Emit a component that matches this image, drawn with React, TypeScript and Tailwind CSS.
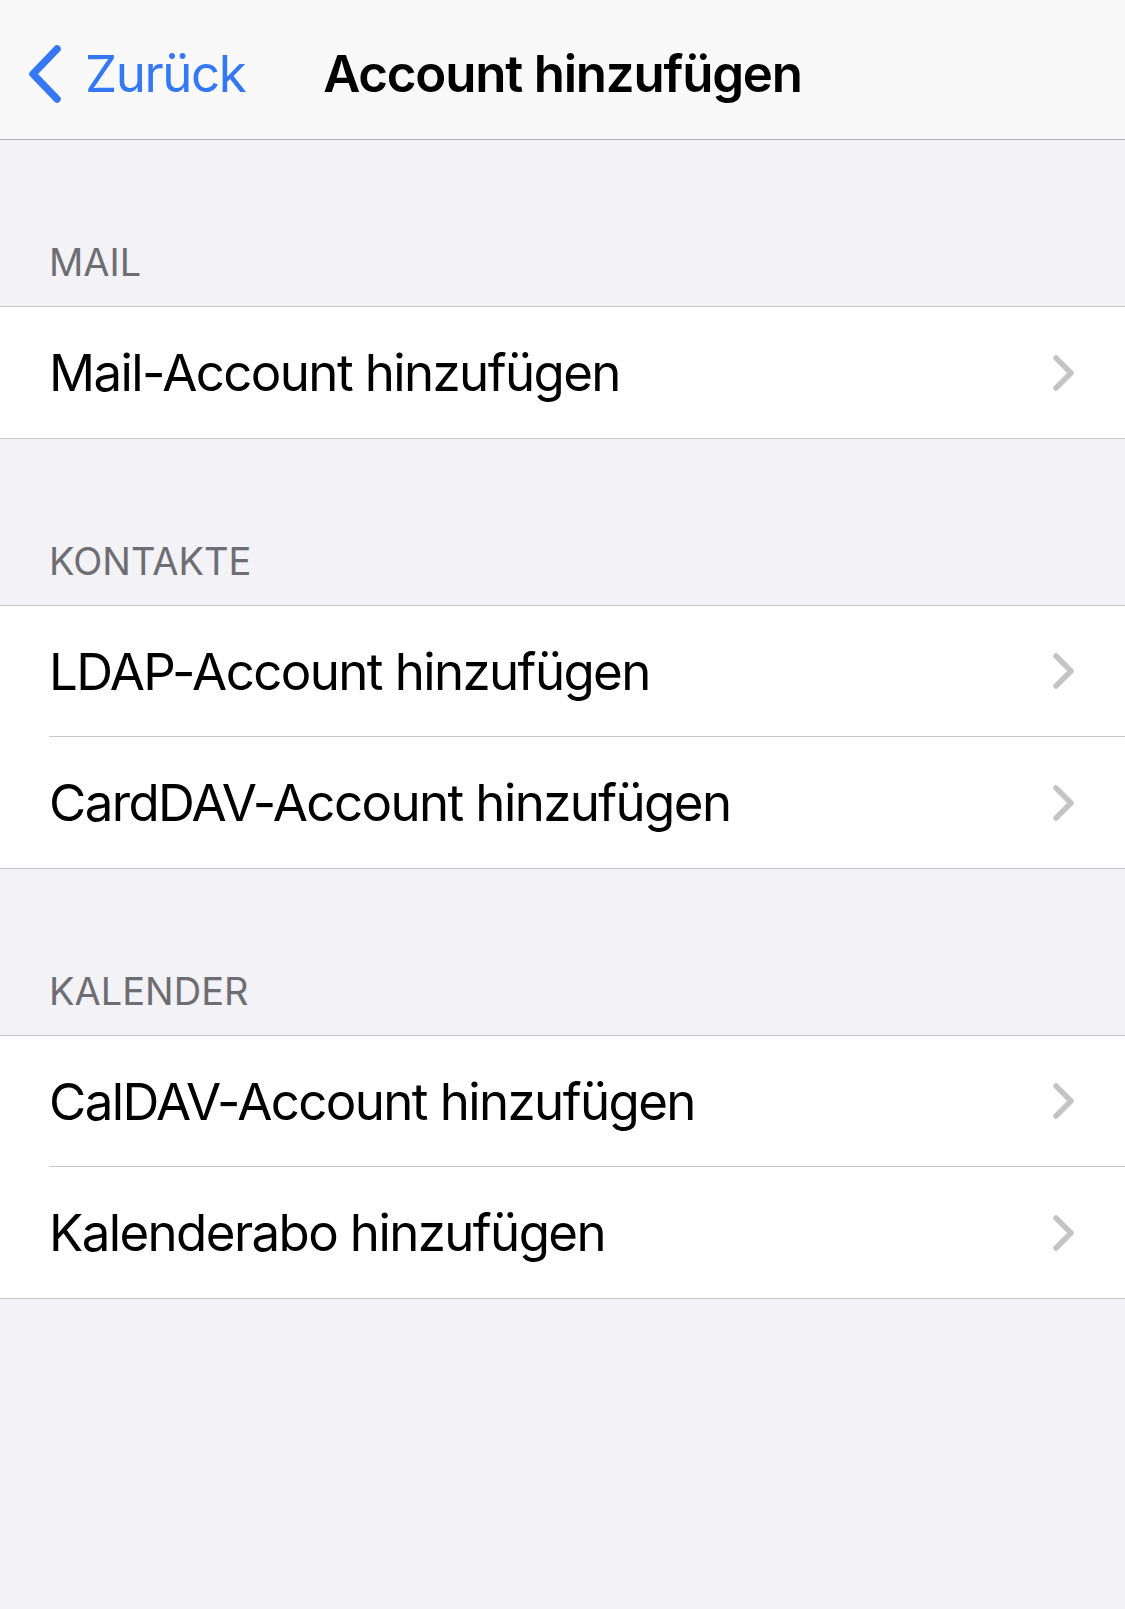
import React from "react";

const font = { fontFamily: "Inter, 'Noto Sans', sans-serif" };

function Chevron() {
  return (
    <svg width="22" height="36" viewBox="0 0 22 36" className="shrink-0">
      <path d="M3 3 L18 18 L3 33" fill="none" stroke="#c4c4c7" strokeWidth="5.5" strokeLinecap="round" strokeLinejoin="round" />
    </svg>
  );
}

function Row({ label, last }: { label: string; last?: boolean }) {
  return (
    <div className="flex h-[131px] pl-[49px]">
      <div className={`flex flex-1 items-center justify-between pr-[50px] ${last ? "" : "border-b border-[#c8c7cc]"}`}>
        <span className="text-[51px] leading-none text-black tracking-[-1.6px]">{label}</span>
        <Chevron />
      </div>
    </div>
  );
}

function Section({ title, rows }: { title: string; rows: string[] }) {
  return (
    <div>
      <div className="flex h-[166px] items-end px-[49px] pb-[20px]">
        <span className="text-[38px] leading-[47px] text-[#6d6d72] tracking-[0px]">{title}</span>
      </div>
      <div className="border-y border-[#c8c7cc] bg-white">
        {rows.map((r, i) => (
          <Row key={r} label={r} last={i === rows.length - 1} />
        ))}
      </div>
    </div>
  );
}

export default function App() {
  return (
    <div className="min-h-[1609px] w-full bg-[#f2f2f7]" style={font}>
      <div className="relative flex h-[140px] items-center border-b border-[#b2b2b2] bg-[#f9f9f9] pt-[8px]">
        <div className="flex items-center pl-[27px] text-[#3478f6]">
          <svg width="36" height="58" viewBox="0 0 36 58" className="mr-[22px]">
            <path d="M30 4 L6 29 L30 54" fill="none" stroke="#3478f6" strokeWidth="7.5" strokeLinecap="round" strokeLinejoin="round" />
          </svg>
          <span className="text-[51px] leading-none tracking-[-1.4px]">Zurück</span>
        </div>
        <div className="absolute inset-x-0 top-0 flex h-[139px] items-center justify-center pt-[8px] pointer-events-none">
          <span className="text-[51px] font-semibold leading-none text-black tracking-[-1.2px]">Account hinzufügen</span>
        </div>
      </div>
      <Section title="MAIL" rows={["Mail-Account hinzufügen"]} />
      <Section title="KONTAKTE" rows={["LDAP-Account hinzufügen", "CardDAV-Account hinzufügen"]} />
      <Section title="KALENDER" rows={["CalDAV-Account hinzufügen", "Kalenderabo hinzufügen"]} />
    </div>
  );
}
